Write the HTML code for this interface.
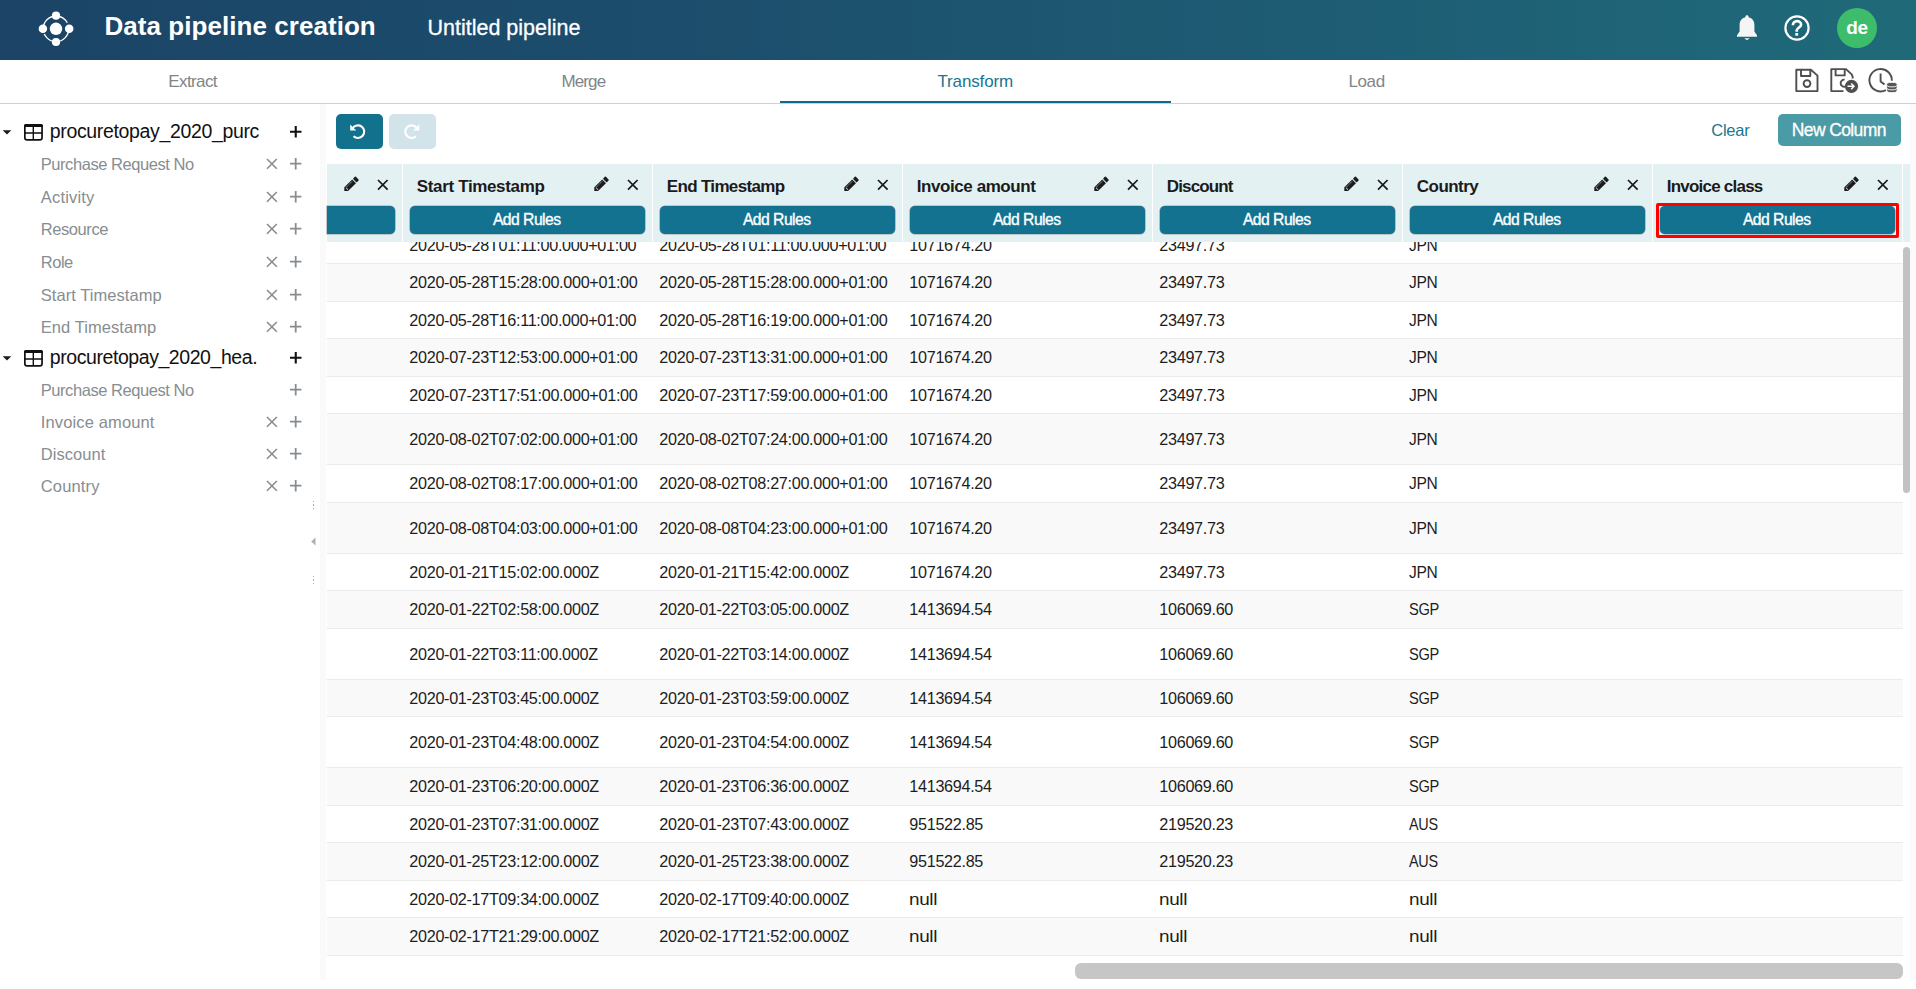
<!DOCTYPE html><html><head><meta charset="utf-8"><style>
*{box-sizing:border-box;margin:0;padding:0}
html,body{width:1916px;height:989px;overflow:hidden;background:#fff}
body{position:relative;font-family:"Liberation Sans",sans-serif}
.t{position:absolute;white-space:pre;line-height:1}
.a{position:absolute}
</style></head><body>
<div class="a" style="left:0;top:0;width:1916px;height:60px;background:linear-gradient(90deg,#1b4466 0%,#1c4d6c 35%,#1e5d74 70%,#1f6a79 100%)"></div>
<svg class="a" style="left:36px;top:9px" width="40" height="40" viewBox="36 9 40 40">
<circle cx="56" cy="28.8" r="12.8" fill="none" stroke="#fff" stroke-width="1.3"/>
<path d="M67.3 22.7A12.8 12.8 0 0 1 68.6 25.6M44.3 34.0A12.8 12.8 0 0 1 43.6 32.3" stroke="#1b4466" stroke-width="2.2" fill="none"/>
<circle cx="56" cy="28.8" r="6.2" fill="#fff"/>
<circle cx="56" cy="15.7" r="4.1" fill="#fff"/>
<circle cx="42.9" cy="28.8" r="4.25" fill="#fff"/>
<circle cx="69.2" cy="28.8" r="4.25" fill="#fff"/>
<circle cx="56" cy="42" r="4.1" fill="#fff"/>
</svg>
<div class="t" style="left:104.50px;top:12.69px;font-size:26px;font-weight:700;color:#fff;letter-spacing:0.05px;">Data pipeline creation</div>
<div class="t" style="left:427.50px;top:17.90px;font-size:21.5px;font-weight:400;color:#fff;letter-spacing:0px;-webkit-text-stroke:0.3px #fff;">Untitled pipeline</div>
<svg class="a" style="left:1734px;top:13.4px" width="26" height="30" viewBox="0 0 26 30">
<path d="M13 2.2c-1 0-1.6.7-1.6 1.5v.6C7.6 5.1 5.6 8.3 5.6 12v6.6L3 22.3v1.4h20v-1.4l-2.6-3.7V12c0-3.7-2-6.9-5.8-7.7v-.6c0-.8-.6-1.5-1.6-1.5z" fill="#f5f5f5"/>
<path d="M10.2 25.2h5.6L13 27.3z" fill="#f5f5f5"/>
</svg>
<svg class="a" style="left:1782px;top:13px" width="30" height="30" viewBox="0 0 30 30">
<circle cx="15" cy="15" r="11.6" fill="none" stroke="#fff" stroke-width="2.2"/>
<path d="M10.9 12.3C10.9 9.7 12.7 8.1 15 8.1C17.3 8.1 19.1 9.6 19.1 11.7C19.1 14.3 15 14.7 14.7 17.4V18.7" fill="none" stroke="#fff" stroke-width="2.6"/>
<rect x="13.3" y="20" width="2.8" height="2.7" fill="#fff"/>
</svg>
<div class="a" style="left:1837px;top:8px;width:40px;height:40px;border-radius:50%;background:#3dbd6c"></div>
<div class="t" style="left:1846.20px;top:18.02px;font-size:19px;font-weight:700;color:#fff;letter-spacing:-0.3px;">de</div>
<div class="a" style="left:0;top:103px;width:1916px;height:1px;background:#cfcfcf"></div>
<div class="a" style="left:780px;top:101px;width:391px;height:2px;background:#0b6b89"></div>
<div class="t" style="left:168.30px;top:72.51px;font-size:17px;font-weight:400;color:#7f8589;letter-spacing:-0.6px;">Extract</div>
<div class="t" style="left:561.50px;top:72.51px;font-size:17px;font-weight:400;color:#7f8589;letter-spacing:-0.9px;">Merge</div>
<div class="t" style="left:937.50px;top:72.51px;font-size:17px;font-weight:400;color:#1a7691;letter-spacing:-0.15px;">Transform</div>
<div class="t" style="left:1348.50px;top:72.51px;font-size:17px;font-weight:400;color:#7f8589;letter-spacing:-0.4px;">Load</div>
<svg class="a" style="left:1790px;top:62px" width="116" height="38" viewBox="1790 62 116 38">
<g fill="none" stroke="#4f4f4f" stroke-width="1.9" stroke-linejoin="round">
<path d="M1796.3 69.8h14.6l6.6 5.8v15.5h-21.2z"/>
<path d="M1801 69.8v6.2h9.3v-6.2"/>
<circle cx="1807" cy="83.6" r="3.4"/>
<path d="M1843.5 91.1h-12.2V69.1h14.7l5.7 5.3 1 2.4v1.6"/>
<path d="M1835.6 69.1v6.3h9.1v-6.3"/>
<path d="M1844.6 79.6a3.6 3.6 0 1 0 .4 7.1"/>
<path d="M1885.9 90.1A11.2 11.2 0 1 1 1891.8 80.8"/>
<path d="M1880.6 73.4v8l3.9 3"/>
</g>
<circle cx="1851.5" cy="86.3" r="6.6" fill="#4f4f4f"/>
<path d="M1847.5 86.3h6.2M1851.2 83.4l2.8 2.9-2.8 2.9" fill="none" stroke="#fff" stroke-width="1.5"/>
<g fill="#575757" stroke="#fff" stroke-width="0.9">
<path d="M1886.6 84.6v6.2a5.3 2.3 0 0 0 10.6 0v-6.2z"/>
<path d="M1886.6 87.6a5.3 2.3 0 0 0 10.6 0" fill="none"/>
<path d="M1886.6 90.4a5.3 2.3 0 0 0 10.6 0" fill="none"/>
<ellipse cx="1891.9" cy="84.6" rx="5.3" ry="2.3"/>
</g>
</svg>
<svg class="a" style="left:2px;top:129.6px" width="10" height="6" viewBox="0 0 10 6"><path d="M0.7 0.2h8.6L5 4.6z" fill="#1a1a1a"/></svg>
<svg class="a" style="left:20px;top:120px" width="26" height="25" viewBox="20 120 26 25"><rect x="24.85" y="124.85" width="17.2" height="15" rx="2.2" fill="none" stroke="#111" stroke-width="1.7"/><rect x="24" y="124" width="18.9" height="3" rx="1.5" fill="#111"/><rect x="24" y="125.5" width="18.9" height="1.5" fill="#111"/><path d="M33.3 126.5v13.5M24.5 133h18" stroke="#111" stroke-width="1.4"/></svg>
<div class="t" style="left:49.80px;top:122.19px;font-size:19.5px;font-weight:400;color:#111;letter-spacing:-0.35px;">procuretopay_2020_purc</div>
<svg class="a" style="left:289.05px;top:125.05px" width="13.5" height="13.5" viewBox="-6.75 -6.75 13.5 13.5"><path d="M-5.75 0H5.75M0 -5.75V5.75" stroke="#111" stroke-width="2.1"/></svg>
<div class="t" style="left:40.80px;top:156.13px;font-size:16.5px;font-weight:400;color:#878d91;letter-spacing:-0.45px;">Purchase Request No</div>
<svg class="a" style="left:266.10px;top:158.20px" width="11.8" height="11.8" viewBox="-5.9 -5.9 11.8 11.8"><path d="M-4.9 -4.9L4.9 4.9M4.9 -4.9L-4.9 4.9" stroke="#878d91" stroke-width="1.6"/></svg>
<svg class="a" style="left:289.10px;top:157.00px" width="13.4" height="13.4" viewBox="-6.7 -6.7 13.4 13.4"><path d="M-5.7 0H5.7M0 -5.7V5.7" stroke="#878d91" stroke-width="1.8"/></svg>
<div class="t" style="left:40.80px;top:188.77px;font-size:16.5px;font-weight:400;color:#878d91;letter-spacing:0.18px;">Activity</div>
<svg class="a" style="left:266.10px;top:190.84px" width="11.8" height="11.8" viewBox="-5.9 -5.9 11.8 11.8"><path d="M-4.9 -4.9L4.9 4.9M4.9 -4.9L-4.9 4.9" stroke="#878d91" stroke-width="1.6"/></svg>
<svg class="a" style="left:289.10px;top:189.64px" width="13.4" height="13.4" viewBox="-6.7 -6.7 13.4 13.4"><path d="M-5.7 0H5.7M0 -5.7V5.7" stroke="#878d91" stroke-width="1.8"/></svg>
<div class="t" style="left:40.80px;top:221.41px;font-size:16.5px;font-weight:400;color:#878d91;letter-spacing:-0.43px;">Resource</div>
<svg class="a" style="left:266.10px;top:223.48px" width="11.8" height="11.8" viewBox="-5.9 -5.9 11.8 11.8"><path d="M-4.9 -4.9L4.9 4.9M4.9 -4.9L-4.9 4.9" stroke="#878d91" stroke-width="1.6"/></svg>
<svg class="a" style="left:289.10px;top:222.28px" width="13.4" height="13.4" viewBox="-6.7 -6.7 13.4 13.4"><path d="M-5.7 0H5.7M0 -5.7V5.7" stroke="#878d91" stroke-width="1.8"/></svg>
<div class="t" style="left:40.80px;top:254.05px;font-size:16.5px;font-weight:400;color:#878d91;letter-spacing:-0.5px;">Role</div>
<svg class="a" style="left:266.10px;top:256.12px" width="11.8" height="11.8" viewBox="-5.9 -5.9 11.8 11.8"><path d="M-4.9 -4.9L4.9 4.9M4.9 -4.9L-4.9 4.9" stroke="#878d91" stroke-width="1.6"/></svg>
<svg class="a" style="left:289.10px;top:254.92px" width="13.4" height="13.4" viewBox="-6.7 -6.7 13.4 13.4"><path d="M-5.7 0H5.7M0 -5.7V5.7" stroke="#878d91" stroke-width="1.8"/></svg>
<div class="t" style="left:40.80px;top:286.69px;font-size:16.5px;font-weight:400;color:#878d91;letter-spacing:0.05px;">Start Timestamp</div>
<svg class="a" style="left:266.10px;top:288.76px" width="11.8" height="11.8" viewBox="-5.9 -5.9 11.8 11.8"><path d="M-4.9 -4.9L4.9 4.9M4.9 -4.9L-4.9 4.9" stroke="#878d91" stroke-width="1.6"/></svg>
<svg class="a" style="left:289.10px;top:287.56px" width="13.4" height="13.4" viewBox="-6.7 -6.7 13.4 13.4"><path d="M-5.7 0H5.7M0 -5.7V5.7" stroke="#878d91" stroke-width="1.8"/></svg>
<div class="t" style="left:40.80px;top:319.33px;font-size:16.5px;font-weight:400;color:#878d91;letter-spacing:0.07px;">End Timestamp</div>
<svg class="a" style="left:266.10px;top:321.40px" width="11.8" height="11.8" viewBox="-5.9 -5.9 11.8 11.8"><path d="M-4.9 -4.9L4.9 4.9M4.9 -4.9L-4.9 4.9" stroke="#878d91" stroke-width="1.6"/></svg>
<svg class="a" style="left:289.10px;top:320.20px" width="13.4" height="13.4" viewBox="-6.7 -6.7 13.4 13.4"><path d="M-5.7 0H5.7M0 -5.7V5.7" stroke="#878d91" stroke-width="1.8"/></svg>
<svg class="a" style="left:2px;top:355.7px" width="10" height="6" viewBox="0 0 10 6"><path d="M0.7 0.2h8.6L5 4.6z" fill="#1a1a1a"/></svg>
<svg class="a" style="left:20px;top:346.1px" width="26" height="25" viewBox="20 120 26 25"><rect x="24.85" y="124.85" width="17.2" height="15" rx="2.2" fill="none" stroke="#111" stroke-width="1.7"/><rect x="24" y="124" width="18.9" height="3" rx="1.5" fill="#111"/><rect x="24" y="125.5" width="18.9" height="1.5" fill="#111"/><path d="M33.3 126.5v13.5M24.5 133h18" stroke="#111" stroke-width="1.4"/></svg>
<div class="t" style="left:49.80px;top:347.59px;font-size:19.5px;font-weight:400;color:#111;letter-spacing:-0.43px;">procuretopay_2020_hea.</div>
<svg class="a" style="left:289.05px;top:351.15px" width="13.5" height="13.5" viewBox="-6.75 -6.75 13.5 13.5"><path d="M-5.75 0H5.75M0 -5.75V5.75" stroke="#111" stroke-width="2.1"/></svg>
<div class="t" style="left:40.80px;top:381.83px;font-size:16.5px;font-weight:400;color:#878d91;letter-spacing:-0.45px;">Purchase Request No</div>
<svg class="a" style="left:289.10px;top:382.70px" width="13.4" height="13.4" viewBox="-6.7 -6.7 13.4 13.4"><path d="M-5.7 0H5.7M0 -5.7V5.7" stroke="#878d91" stroke-width="1.8"/></svg>
<div class="t" style="left:40.80px;top:413.90px;font-size:16.5px;font-weight:400;color:#878d91;letter-spacing:0.13px;">Invoice amount</div>
<svg class="a" style="left:266.10px;top:415.97px" width="11.8" height="11.8" viewBox="-5.9 -5.9 11.8 11.8"><path d="M-4.9 -4.9L4.9 4.9M4.9 -4.9L-4.9 4.9" stroke="#878d91" stroke-width="1.6"/></svg>
<svg class="a" style="left:289.10px;top:414.77px" width="13.4" height="13.4" viewBox="-6.7 -6.7 13.4 13.4"><path d="M-5.7 0H5.7M0 -5.7V5.7" stroke="#878d91" stroke-width="1.8"/></svg>
<div class="t" style="left:40.80px;top:445.97px;font-size:16.5px;font-weight:400;color:#878d91;letter-spacing:0.04px;">Discount</div>
<svg class="a" style="left:266.10px;top:448.04px" width="11.8" height="11.8" viewBox="-5.9 -5.9 11.8 11.8"><path d="M-4.9 -4.9L4.9 4.9M4.9 -4.9L-4.9 4.9" stroke="#878d91" stroke-width="1.6"/></svg>
<svg class="a" style="left:289.10px;top:446.84px" width="13.4" height="13.4" viewBox="-6.7 -6.7 13.4 13.4"><path d="M-5.7 0H5.7M0 -5.7V5.7" stroke="#878d91" stroke-width="1.8"/></svg>
<div class="t" style="left:40.80px;top:478.04px;font-size:16.5px;font-weight:400;color:#878d91;letter-spacing:0.15px;">Country</div>
<svg class="a" style="left:266.10px;top:480.11px" width="11.8" height="11.8" viewBox="-5.9 -5.9 11.8 11.8"><path d="M-4.9 -4.9L4.9 4.9M4.9 -4.9L-4.9 4.9" stroke="#878d91" stroke-width="1.6"/></svg>
<svg class="a" style="left:289.10px;top:478.91px" width="13.4" height="13.4" viewBox="-6.7 -6.7 13.4 13.4"><path d="M-5.7 0H5.7M0 -5.7V5.7" stroke="#878d91" stroke-width="1.8"/></svg>
<div class="a" style="left:320px;top:104px;width:6px;height:876px;background:#fafafa"></div>
<div class="a" style="left:312.5px;top:501.0px;width:1.2px;height:1.2px;background:#a8a8a8"></div>
<div class="a" style="left:312.5px;top:504.4px;width:1.2px;height:1.2px;background:#a8a8a8"></div>
<div class="a" style="left:312.5px;top:507.8px;width:1.2px;height:1.2px;background:#a8a8a8"></div>
<div class="a" style="left:312.5px;top:576.0px;width:1.2px;height:1.2px;background:#a8a8a8"></div>
<div class="a" style="left:312.5px;top:579.4px;width:1.2px;height:1.2px;background:#a8a8a8"></div>
<div class="a" style="left:312.5px;top:582.8px;width:1.2px;height:1.2px;background:#a8a8a8"></div>
<svg class="a" style="left:310px;top:537px" width="7" height="9" viewBox="0 0 7 9"><path d="M5.5 0.6v7.8L1.2 4.5z" fill="#b0b0b0"/></svg>
<div class="a" style="left:336px;top:114px;width:47px;height:35px;border-radius:5px;background:#12718d"></div>
<div class="a" style="left:389px;top:114px;width:47px;height:35px;border-radius:5px;background:#d2e3e9"></div>
<svg class="a" style="left:346px;top:120px" width="26" height="24" viewBox="346 120 26 24">
<path d="M352.6 128.3a6.3 6.3 0 1 1 .9 7.9" fill="none" stroke="#fff" stroke-width="2.1"/>
<path d="M350.2 124.6v6h6z" fill="#fff"/>
</svg>
<svg class="a" style="left:397px;top:120px" width="26" height="24" viewBox="399 120 26 24">
<path d="M418.9 128.3a6.3 6.3 0 1 0 -.9 7.9" fill="none" stroke="#fff" stroke-width="2.1"/>
<path d="M421.3 124.6v6h-6z" fill="#fff"/>
</svg>
<div class="t" style="left:1711.20px;top:121.93px;font-size:16.5px;font-weight:400;color:#177892;letter-spacing:-0.2px;">Clear</div>
<div class="a" style="left:1778px;top:114px;width:123px;height:32px;border-radius:5px;background:#4b9ba6"></div>
<div class="t" style="left:1791.80px;top:122.49px;font-size:17.5px;font-weight:400;color:#fff;letter-spacing:-0.62px;-webkit-text-stroke:0.3px #fff;">New Column</div>
<div class="a" style="left:327px;top:164px;width:1583px;height:78px;background:#e4f1f3"></div>
<svg class="a" style="left:344px;top:176px" width="18" height="18" viewBox="344 176 18 18"><g transform="translate(344.3,191.1) rotate(-45)"><path d="M0 0L2.65 -2.65H13.85V2.65H2.65Z" fill="#1c1c1c"/><rect x="14.75" y="-2.65" width="3.55" height="5.3" rx="0.8" fill="#1c1c1c"/><path d="M3.6 -1.4V1.8" stroke="#e4f1f3" stroke-width="0.9"/><path d="M4.8 -1.35H12.6" stroke="#e4f1f3" stroke-width="0.7" stroke-dasharray="1.1 0.7"/></g></svg>
<svg class="a" style="left:377.10px;top:179.40px" width="11.6" height="11.6" viewBox="-5.8 -5.8 11.6 11.6"><path d="M-4.8 -4.8L4.8 4.8M4.8 -4.8L-4.8 4.8" stroke="#1a1a1a" stroke-width="1.75"/></svg>
<div class="a" style="left:327px;top:205.6px;width:68.0px;height:28.9px;border-radius:0 5px 5px 0;background:#127290;box-shadow:0 0 0 0.6px rgba(80,90,95,.55)"></div>
<div class="a" style="left:402px;top:164px;width:1px;height:78px;background:#fff"></div>
<svg class="a" style="left:594px;top:176px" width="18" height="18" viewBox="594 176 18 18"><g transform="translate(594.3,191.1) rotate(-45)"><path d="M0 0L2.65 -2.65H13.85V2.65H2.65Z" fill="#1c1c1c"/><rect x="14.75" y="-2.65" width="3.55" height="5.3" rx="0.8" fill="#1c1c1c"/><path d="M3.6 -1.4V1.8" stroke="#e4f1f3" stroke-width="0.9"/><path d="M4.8 -1.35H12.6" stroke="#e4f1f3" stroke-width="0.7" stroke-dasharray="1.1 0.7"/></g></svg>
<svg class="a" style="left:627.10px;top:179.40px" width="11.6" height="11.6" viewBox="-5.8 -5.8 11.6 11.6"><path d="M-4.8 -4.8L4.8 4.8M4.8 -4.8L-4.8 4.8" stroke="#1a1a1a" stroke-width="1.75"/></svg>
<div class="a" style="left:409.5px;top:205.6px;width:235.5px;height:28.9px;border-radius:5px;background:#127290;box-shadow:0 0 0 0.6px rgba(80,90,95,.55)"></div>
<div class="t" style="left:416.80px;top:177.71px;font-size:17px;font-weight:700;color:#1b1b1b;letter-spacing:-0.35px;">Start Timestamp</div>
<div class="t" style="left:492.90px;top:211.81px;font-size:15.7px;font-weight:400;color:#fff;letter-spacing:-0.52px;-webkit-text-stroke:0.35px #fff;">Add Rules</div>
<div class="a" style="left:652px;top:164px;width:1px;height:78px;background:#fff"></div>
<svg class="a" style="left:844px;top:176px" width="18" height="18" viewBox="844 176 18 18"><g transform="translate(844.3,191.1) rotate(-45)"><path d="M0 0L2.65 -2.65H13.85V2.65H2.65Z" fill="#1c1c1c"/><rect x="14.75" y="-2.65" width="3.55" height="5.3" rx="0.8" fill="#1c1c1c"/><path d="M3.6 -1.4V1.8" stroke="#e4f1f3" stroke-width="0.9"/><path d="M4.8 -1.35H12.6" stroke="#e4f1f3" stroke-width="0.7" stroke-dasharray="1.1 0.7"/></g></svg>
<svg class="a" style="left:877.10px;top:179.40px" width="11.6" height="11.6" viewBox="-5.8 -5.8 11.6 11.6"><path d="M-4.8 -4.8L4.8 4.8M4.8 -4.8L-4.8 4.8" stroke="#1a1a1a" stroke-width="1.75"/></svg>
<div class="a" style="left:659.5px;top:205.6px;width:235.5px;height:28.9px;border-radius:5px;background:#127290;box-shadow:0 0 0 0.6px rgba(80,90,95,.55)"></div>
<div class="t" style="left:666.80px;top:177.71px;font-size:17px;font-weight:700;color:#1b1b1b;letter-spacing:-0.67px;">End Timestamp</div>
<div class="t" style="left:742.90px;top:211.81px;font-size:15.7px;font-weight:400;color:#fff;letter-spacing:-0.52px;-webkit-text-stroke:0.35px #fff;">Add Rules</div>
<div class="a" style="left:902px;top:164px;width:1px;height:78px;background:#fff"></div>
<svg class="a" style="left:1094px;top:176px" width="18" height="18" viewBox="1094 176 18 18"><g transform="translate(1094.3,191.1) rotate(-45)"><path d="M0 0L2.65 -2.65H13.85V2.65H2.65Z" fill="#1c1c1c"/><rect x="14.75" y="-2.65" width="3.55" height="5.3" rx="0.8" fill="#1c1c1c"/><path d="M3.6 -1.4V1.8" stroke="#e4f1f3" stroke-width="0.9"/><path d="M4.8 -1.35H12.6" stroke="#e4f1f3" stroke-width="0.7" stroke-dasharray="1.1 0.7"/></g></svg>
<svg class="a" style="left:1127.10px;top:179.40px" width="11.6" height="11.6" viewBox="-5.8 -5.8 11.6 11.6"><path d="M-4.8 -4.8L4.8 4.8M4.8 -4.8L-4.8 4.8" stroke="#1a1a1a" stroke-width="1.75"/></svg>
<div class="a" style="left:909.5px;top:205.6px;width:235.5px;height:28.9px;border-radius:5px;background:#127290;box-shadow:0 0 0 0.6px rgba(80,90,95,.55)"></div>
<div class="t" style="left:916.80px;top:177.71px;font-size:17px;font-weight:700;color:#1b1b1b;letter-spacing:-0.43px;">Invoice amount</div>
<div class="t" style="left:992.90px;top:211.81px;font-size:15.7px;font-weight:400;color:#fff;letter-spacing:-0.52px;-webkit-text-stroke:0.35px #fff;">Add Rules</div>
<div class="a" style="left:1152px;top:164px;width:1px;height:78px;background:#fff"></div>
<svg class="a" style="left:1344px;top:176px" width="18" height="18" viewBox="1344 176 18 18"><g transform="translate(1344.3,191.1) rotate(-45)"><path d="M0 0L2.65 -2.65H13.85V2.65H2.65Z" fill="#1c1c1c"/><rect x="14.75" y="-2.65" width="3.55" height="5.3" rx="0.8" fill="#1c1c1c"/><path d="M3.6 -1.4V1.8" stroke="#e4f1f3" stroke-width="0.9"/><path d="M4.8 -1.35H12.6" stroke="#e4f1f3" stroke-width="0.7" stroke-dasharray="1.1 0.7"/></g></svg>
<svg class="a" style="left:1377.10px;top:179.40px" width="11.6" height="11.6" viewBox="-5.8 -5.8 11.6 11.6"><path d="M-4.8 -4.8L4.8 4.8M4.8 -4.8L-4.8 4.8" stroke="#1a1a1a" stroke-width="1.75"/></svg>
<div class="a" style="left:1159.5px;top:205.6px;width:235.5px;height:28.9px;border-radius:5px;background:#127290;box-shadow:0 0 0 0.6px rgba(80,90,95,.55)"></div>
<div class="t" style="left:1166.80px;top:177.71px;font-size:17px;font-weight:700;color:#1b1b1b;letter-spacing:-0.86px;">Discount</div>
<div class="t" style="left:1242.90px;top:211.81px;font-size:15.7px;font-weight:400;color:#fff;letter-spacing:-0.52px;-webkit-text-stroke:0.35px #fff;">Add Rules</div>
<div class="a" style="left:1402px;top:164px;width:1px;height:78px;background:#fff"></div>
<svg class="a" style="left:1594px;top:176px" width="18" height="18" viewBox="1594 176 18 18"><g transform="translate(1594.3,191.1) rotate(-45)"><path d="M0 0L2.65 -2.65H13.85V2.65H2.65Z" fill="#1c1c1c"/><rect x="14.75" y="-2.65" width="3.55" height="5.3" rx="0.8" fill="#1c1c1c"/><path d="M3.6 -1.4V1.8" stroke="#e4f1f3" stroke-width="0.9"/><path d="M4.8 -1.35H12.6" stroke="#e4f1f3" stroke-width="0.7" stroke-dasharray="1.1 0.7"/></g></svg>
<svg class="a" style="left:1627.10px;top:179.40px" width="11.6" height="11.6" viewBox="-5.8 -5.8 11.6 11.6"><path d="M-4.8 -4.8L4.8 4.8M4.8 -4.8L-4.8 4.8" stroke="#1a1a1a" stroke-width="1.75"/></svg>
<div class="a" style="left:1409.5px;top:205.6px;width:235.5px;height:28.9px;border-radius:5px;background:#127290;box-shadow:0 0 0 0.6px rgba(80,90,95,.55)"></div>
<div class="t" style="left:1416.80px;top:177.71px;font-size:17px;font-weight:700;color:#1b1b1b;letter-spacing:-0.53px;">Country</div>
<div class="t" style="left:1492.90px;top:211.81px;font-size:15.7px;font-weight:400;color:#fff;letter-spacing:-0.52px;-webkit-text-stroke:0.35px #fff;">Add Rules</div>
<div class="a" style="left:1652px;top:164px;width:1px;height:78px;background:#fff"></div>
<svg class="a" style="left:1844px;top:176px" width="18" height="18" viewBox="1844 176 18 18"><g transform="translate(1844.3,191.1) rotate(-45)"><path d="M0 0L2.65 -2.65H13.85V2.65H2.65Z" fill="#1c1c1c"/><rect x="14.75" y="-2.65" width="3.55" height="5.3" rx="0.8" fill="#1c1c1c"/><path d="M3.6 -1.4V1.8" stroke="#e4f1f3" stroke-width="0.9"/><path d="M4.8 -1.35H12.6" stroke="#e4f1f3" stroke-width="0.7" stroke-dasharray="1.1 0.7"/></g></svg>
<svg class="a" style="left:1877.10px;top:179.40px" width="11.6" height="11.6" viewBox="-5.8 -5.8 11.6 11.6"><path d="M-4.8 -4.8L4.8 4.8M4.8 -4.8L-4.8 4.8" stroke="#1a1a1a" stroke-width="1.75"/></svg>
<div class="a" style="left:1659.5px;top:205.6px;width:235.5px;height:28.9px;border-radius:5px;background:#127290;box-shadow:0 0 0 0.6px rgba(80,90,95,.55)"></div>
<div class="t" style="left:1666.80px;top:177.71px;font-size:17px;font-weight:700;color:#1b1b1b;letter-spacing:-0.78px;">Invoice class</div>
<div class="t" style="left:1742.90px;top:211.81px;font-size:15.7px;font-weight:400;color:#fff;letter-spacing:-0.52px;-webkit-text-stroke:0.35px #fff;">Add Rules</div>
<div class="a" style="left:1902px;top:164px;width:1px;height:78px;background:#fff"></div>
<div class="a" style="left:1655.9px;top:203.1px;width:243.1px;height:34.5px;border:3px solid #f00;border-radius:2px"></div>
<div class="a" style="left:0;top:242px;width:1916px;height:747px;overflow:hidden">
<div class="a" style="left:0;top:-242px;width:1916px;height:989px">
<div class="a" style="left:327px;top:227px;width:1576px;height:36px;background:#fff"></div>
<div class="a" style="left:327px;top:263px;width:1576px;height:1px;background:#ebebeb"></div>
<div class="t" style="left:409.30px;top:236.79px;font-size:16.2px;font-weight:400;color:#1d1d1d;letter-spacing:-0.31px;">2020-05-28T01:11:00.000+01:00</div>
<div class="t" style="left:659.30px;top:236.79px;font-size:16.2px;font-weight:400;color:#1d1d1d;letter-spacing:-0.31px;">2020-05-28T01:11:00.000+01:00</div>
<div class="t" style="left:909.30px;top:236.79px;font-size:16.2px;font-weight:400;color:#1d1d1d;letter-spacing:-0.31px;">1071674.20</div>
<div class="t" style="left:1159.30px;top:236.79px;font-size:16.2px;font-weight:400;color:#1d1d1d;letter-spacing:-0.31px;">23497.73</div>
<div class="t" style="left:1409.30px;top:236.79px;font-size:16.2px;font-weight:400;color:#1d1d1d;letter-spacing:-0.31px;transform:scaleX(0.962);transform-origin:0 0;">JPN</div>
<div class="a" style="left:327px;top:264px;width:1576px;height:37px;background:#f9f9f9"></div>
<div class="a" style="left:327px;top:301px;width:1576px;height:1px;background:#ebebeb"></div>
<div class="t" style="left:409.30px;top:274.29px;font-size:16.2px;font-weight:400;color:#1d1d1d;letter-spacing:-0.31px;">2020-05-28T15:28:00.000+01:00</div>
<div class="t" style="left:659.30px;top:274.29px;font-size:16.2px;font-weight:400;color:#1d1d1d;letter-spacing:-0.31px;">2020-05-28T15:28:00.000+01:00</div>
<div class="t" style="left:909.30px;top:274.29px;font-size:16.2px;font-weight:400;color:#1d1d1d;letter-spacing:-0.31px;">1071674.20</div>
<div class="t" style="left:1159.30px;top:274.29px;font-size:16.2px;font-weight:400;color:#1d1d1d;letter-spacing:-0.31px;">23497.73</div>
<div class="t" style="left:1409.30px;top:274.29px;font-size:16.2px;font-weight:400;color:#1d1d1d;letter-spacing:-0.31px;transform:scaleX(0.962);transform-origin:0 0;">JPN</div>
<div class="a" style="left:327px;top:302px;width:1576px;height:36px;background:#fff"></div>
<div class="a" style="left:327px;top:338px;width:1576px;height:1px;background:#ebebeb"></div>
<div class="t" style="left:409.30px;top:311.79px;font-size:16.2px;font-weight:400;color:#1d1d1d;letter-spacing:-0.31px;">2020-05-28T16:11:00.000+01:00</div>
<div class="t" style="left:659.30px;top:311.79px;font-size:16.2px;font-weight:400;color:#1d1d1d;letter-spacing:-0.31px;">2020-05-28T16:19:00.000+01:00</div>
<div class="t" style="left:909.30px;top:311.79px;font-size:16.2px;font-weight:400;color:#1d1d1d;letter-spacing:-0.31px;">1071674.20</div>
<div class="t" style="left:1159.30px;top:311.79px;font-size:16.2px;font-weight:400;color:#1d1d1d;letter-spacing:-0.31px;">23497.73</div>
<div class="t" style="left:1409.30px;top:311.79px;font-size:16.2px;font-weight:400;color:#1d1d1d;letter-spacing:-0.31px;transform:scaleX(0.962);transform-origin:0 0;">JPN</div>
<div class="a" style="left:327px;top:339px;width:1576px;height:37px;background:#f9f9f9"></div>
<div class="a" style="left:327px;top:376px;width:1576px;height:1px;background:#ebebeb"></div>
<div class="t" style="left:409.30px;top:349.29px;font-size:16.2px;font-weight:400;color:#1d1d1d;letter-spacing:-0.31px;">2020-07-23T12:53:00.000+01:00</div>
<div class="t" style="left:659.30px;top:349.29px;font-size:16.2px;font-weight:400;color:#1d1d1d;letter-spacing:-0.31px;">2020-07-23T13:31:00.000+01:00</div>
<div class="t" style="left:909.30px;top:349.29px;font-size:16.2px;font-weight:400;color:#1d1d1d;letter-spacing:-0.31px;">1071674.20</div>
<div class="t" style="left:1159.30px;top:349.29px;font-size:16.2px;font-weight:400;color:#1d1d1d;letter-spacing:-0.31px;">23497.73</div>
<div class="t" style="left:1409.30px;top:349.29px;font-size:16.2px;font-weight:400;color:#1d1d1d;letter-spacing:-0.31px;transform:scaleX(0.962);transform-origin:0 0;">JPN</div>
<div class="a" style="left:327px;top:377px;width:1576px;height:36px;background:#fff"></div>
<div class="a" style="left:327px;top:413px;width:1576px;height:1px;background:#ebebeb"></div>
<div class="t" style="left:409.30px;top:386.79px;font-size:16.2px;font-weight:400;color:#1d1d1d;letter-spacing:-0.31px;">2020-07-23T17:51:00.000+01:00</div>
<div class="t" style="left:659.30px;top:386.79px;font-size:16.2px;font-weight:400;color:#1d1d1d;letter-spacing:-0.31px;">2020-07-23T17:59:00.000+01:00</div>
<div class="t" style="left:909.30px;top:386.79px;font-size:16.2px;font-weight:400;color:#1d1d1d;letter-spacing:-0.31px;">1071674.20</div>
<div class="t" style="left:1159.30px;top:386.79px;font-size:16.2px;font-weight:400;color:#1d1d1d;letter-spacing:-0.31px;">23497.73</div>
<div class="t" style="left:1409.30px;top:386.79px;font-size:16.2px;font-weight:400;color:#1d1d1d;letter-spacing:-0.31px;transform:scaleX(0.962);transform-origin:0 0;">JPN</div>
<div class="a" style="left:327px;top:414px;width:1576px;height:50px;background:#f9f9f9"></div>
<div class="a" style="left:327px;top:464px;width:1576px;height:1px;background:#ebebeb"></div>
<div class="t" style="left:409.30px;top:430.79px;font-size:16.2px;font-weight:400;color:#1d1d1d;letter-spacing:-0.31px;">2020-08-02T07:02:00.000+01:00</div>
<div class="t" style="left:659.30px;top:430.79px;font-size:16.2px;font-weight:400;color:#1d1d1d;letter-spacing:-0.31px;">2020-08-02T07:24:00.000+01:00</div>
<div class="t" style="left:909.30px;top:430.79px;font-size:16.2px;font-weight:400;color:#1d1d1d;letter-spacing:-0.31px;">1071674.20</div>
<div class="t" style="left:1159.30px;top:430.79px;font-size:16.2px;font-weight:400;color:#1d1d1d;letter-spacing:-0.31px;">23497.73</div>
<div class="t" style="left:1409.30px;top:430.79px;font-size:16.2px;font-weight:400;color:#1d1d1d;letter-spacing:-0.31px;transform:scaleX(0.962);transform-origin:0 0;">JPN</div>
<div class="a" style="left:327px;top:465px;width:1576px;height:37px;background:#fff"></div>
<div class="a" style="left:327px;top:502px;width:1576px;height:1px;background:#ebebeb"></div>
<div class="t" style="left:409.30px;top:475.29px;font-size:16.2px;font-weight:400;color:#1d1d1d;letter-spacing:-0.31px;">2020-08-02T08:17:00.000+01:00</div>
<div class="t" style="left:659.30px;top:475.29px;font-size:16.2px;font-weight:400;color:#1d1d1d;letter-spacing:-0.31px;">2020-08-02T08:27:00.000+01:00</div>
<div class="t" style="left:909.30px;top:475.29px;font-size:16.2px;font-weight:400;color:#1d1d1d;letter-spacing:-0.31px;">1071674.20</div>
<div class="t" style="left:1159.30px;top:475.29px;font-size:16.2px;font-weight:400;color:#1d1d1d;letter-spacing:-0.31px;">23497.73</div>
<div class="t" style="left:1409.30px;top:475.29px;font-size:16.2px;font-weight:400;color:#1d1d1d;letter-spacing:-0.31px;transform:scaleX(0.962);transform-origin:0 0;">JPN</div>
<div class="a" style="left:327px;top:503px;width:1576px;height:50px;background:#f9f9f9"></div>
<div class="a" style="left:327px;top:553px;width:1576px;height:1px;background:#ebebeb"></div>
<div class="t" style="left:409.30px;top:519.79px;font-size:16.2px;font-weight:400;color:#1d1d1d;letter-spacing:-0.31px;">2020-08-08T04:03:00.000+01:00</div>
<div class="t" style="left:659.30px;top:519.79px;font-size:16.2px;font-weight:400;color:#1d1d1d;letter-spacing:-0.31px;">2020-08-08T04:23:00.000+01:00</div>
<div class="t" style="left:909.30px;top:519.79px;font-size:16.2px;font-weight:400;color:#1d1d1d;letter-spacing:-0.31px;">1071674.20</div>
<div class="t" style="left:1159.30px;top:519.79px;font-size:16.2px;font-weight:400;color:#1d1d1d;letter-spacing:-0.31px;">23497.73</div>
<div class="t" style="left:1409.30px;top:519.79px;font-size:16.2px;font-weight:400;color:#1d1d1d;letter-spacing:-0.31px;transform:scaleX(0.962);transform-origin:0 0;">JPN</div>
<div class="a" style="left:327px;top:554px;width:1576px;height:36px;background:#fff"></div>
<div class="a" style="left:327px;top:590px;width:1576px;height:1px;background:#ebebeb"></div>
<div class="t" style="left:409.30px;top:563.79px;font-size:16.2px;font-weight:400;color:#1d1d1d;letter-spacing:-0.31px;">2020-01-21T15:02:00.000Z</div>
<div class="t" style="left:659.30px;top:563.79px;font-size:16.2px;font-weight:400;color:#1d1d1d;letter-spacing:-0.31px;">2020-01-21T15:42:00.000Z</div>
<div class="t" style="left:909.30px;top:563.79px;font-size:16.2px;font-weight:400;color:#1d1d1d;letter-spacing:-0.31px;">1071674.20</div>
<div class="t" style="left:1159.30px;top:563.79px;font-size:16.2px;font-weight:400;color:#1d1d1d;letter-spacing:-0.31px;">23497.73</div>
<div class="t" style="left:1409.30px;top:563.79px;font-size:16.2px;font-weight:400;color:#1d1d1d;letter-spacing:-0.31px;transform:scaleX(0.962);transform-origin:0 0;">JPN</div>
<div class="a" style="left:327px;top:591px;width:1576px;height:37px;background:#f9f9f9"></div>
<div class="a" style="left:327px;top:628px;width:1576px;height:1px;background:#ebebeb"></div>
<div class="t" style="left:409.30px;top:601.29px;font-size:16.2px;font-weight:400;color:#1d1d1d;letter-spacing:-0.31px;">2020-01-22T02:58:00.000Z</div>
<div class="t" style="left:659.30px;top:601.29px;font-size:16.2px;font-weight:400;color:#1d1d1d;letter-spacing:-0.31px;">2020-01-22T03:05:00.000Z</div>
<div class="t" style="left:909.30px;top:601.29px;font-size:16.2px;font-weight:400;color:#1d1d1d;letter-spacing:-0.31px;">1413694.54</div>
<div class="t" style="left:1159.30px;top:601.29px;font-size:16.2px;font-weight:400;color:#1d1d1d;letter-spacing:-0.31px;">106069.60</div>
<div class="t" style="left:1409.30px;top:601.29px;font-size:16.2px;font-weight:400;color:#1d1d1d;letter-spacing:-0.31px;transform:scaleX(0.903);transform-origin:0 0;">SGP</div>
<div class="a" style="left:327px;top:629px;width:1576px;height:50px;background:#fff"></div>
<div class="a" style="left:327px;top:679px;width:1576px;height:1px;background:#ebebeb"></div>
<div class="t" style="left:409.30px;top:645.79px;font-size:16.2px;font-weight:400;color:#1d1d1d;letter-spacing:-0.31px;">2020-01-22T03:11:00.000Z</div>
<div class="t" style="left:659.30px;top:645.79px;font-size:16.2px;font-weight:400;color:#1d1d1d;letter-spacing:-0.31px;">2020-01-22T03:14:00.000Z</div>
<div class="t" style="left:909.30px;top:645.79px;font-size:16.2px;font-weight:400;color:#1d1d1d;letter-spacing:-0.31px;">1413694.54</div>
<div class="t" style="left:1159.30px;top:645.79px;font-size:16.2px;font-weight:400;color:#1d1d1d;letter-spacing:-0.31px;">106069.60</div>
<div class="t" style="left:1409.30px;top:645.79px;font-size:16.2px;font-weight:400;color:#1d1d1d;letter-spacing:-0.31px;transform:scaleX(0.903);transform-origin:0 0;">SGP</div>
<div class="a" style="left:327px;top:680px;width:1576px;height:36px;background:#f9f9f9"></div>
<div class="a" style="left:327px;top:716px;width:1576px;height:1px;background:#ebebeb"></div>
<div class="t" style="left:409.30px;top:689.79px;font-size:16.2px;font-weight:400;color:#1d1d1d;letter-spacing:-0.31px;">2020-01-23T03:45:00.000Z</div>
<div class="t" style="left:659.30px;top:689.79px;font-size:16.2px;font-weight:400;color:#1d1d1d;letter-spacing:-0.31px;">2020-01-23T03:59:00.000Z</div>
<div class="t" style="left:909.30px;top:689.79px;font-size:16.2px;font-weight:400;color:#1d1d1d;letter-spacing:-0.31px;">1413694.54</div>
<div class="t" style="left:1159.30px;top:689.79px;font-size:16.2px;font-weight:400;color:#1d1d1d;letter-spacing:-0.31px;">106069.60</div>
<div class="t" style="left:1409.30px;top:689.79px;font-size:16.2px;font-weight:400;color:#1d1d1d;letter-spacing:-0.31px;transform:scaleX(0.903);transform-origin:0 0;">SGP</div>
<div class="a" style="left:327px;top:717px;width:1576px;height:50px;background:#fff"></div>
<div class="a" style="left:327px;top:767px;width:1576px;height:1px;background:#ebebeb"></div>
<div class="t" style="left:409.30px;top:733.79px;font-size:16.2px;font-weight:400;color:#1d1d1d;letter-spacing:-0.31px;">2020-01-23T04:48:00.000Z</div>
<div class="t" style="left:659.30px;top:733.79px;font-size:16.2px;font-weight:400;color:#1d1d1d;letter-spacing:-0.31px;">2020-01-23T04:54:00.000Z</div>
<div class="t" style="left:909.30px;top:733.79px;font-size:16.2px;font-weight:400;color:#1d1d1d;letter-spacing:-0.31px;">1413694.54</div>
<div class="t" style="left:1159.30px;top:733.79px;font-size:16.2px;font-weight:400;color:#1d1d1d;letter-spacing:-0.31px;">106069.60</div>
<div class="t" style="left:1409.30px;top:733.79px;font-size:16.2px;font-weight:400;color:#1d1d1d;letter-spacing:-0.31px;transform:scaleX(0.903);transform-origin:0 0;">SGP</div>
<div class="a" style="left:327px;top:768px;width:1576px;height:37px;background:#f9f9f9"></div>
<div class="a" style="left:327px;top:805px;width:1576px;height:1px;background:#ebebeb"></div>
<div class="t" style="left:409.30px;top:778.29px;font-size:16.2px;font-weight:400;color:#1d1d1d;letter-spacing:-0.31px;">2020-01-23T06:20:00.000Z</div>
<div class="t" style="left:659.30px;top:778.29px;font-size:16.2px;font-weight:400;color:#1d1d1d;letter-spacing:-0.31px;">2020-01-23T06:36:00.000Z</div>
<div class="t" style="left:909.30px;top:778.29px;font-size:16.2px;font-weight:400;color:#1d1d1d;letter-spacing:-0.31px;">1413694.54</div>
<div class="t" style="left:1159.30px;top:778.29px;font-size:16.2px;font-weight:400;color:#1d1d1d;letter-spacing:-0.31px;">106069.60</div>
<div class="t" style="left:1409.30px;top:778.29px;font-size:16.2px;font-weight:400;color:#1d1d1d;letter-spacing:-0.31px;transform:scaleX(0.903);transform-origin:0 0;">SGP</div>
<div class="a" style="left:327px;top:806px;width:1576px;height:36px;background:#fff"></div>
<div class="a" style="left:327px;top:842px;width:1576px;height:1px;background:#ebebeb"></div>
<div class="t" style="left:409.30px;top:815.79px;font-size:16.2px;font-weight:400;color:#1d1d1d;letter-spacing:-0.31px;">2020-01-23T07:31:00.000Z</div>
<div class="t" style="left:659.30px;top:815.79px;font-size:16.2px;font-weight:400;color:#1d1d1d;letter-spacing:-0.31px;">2020-01-23T07:43:00.000Z</div>
<div class="t" style="left:909.30px;top:815.79px;font-size:16.2px;font-weight:400;color:#1d1d1d;letter-spacing:-0.31px;">951522.85</div>
<div class="t" style="left:1159.30px;top:815.79px;font-size:16.2px;font-weight:400;color:#1d1d1d;letter-spacing:-0.31px;">219520.23</div>
<div class="t" style="left:1409.30px;top:815.79px;font-size:16.2px;font-weight:400;color:#1d1d1d;letter-spacing:-0.31px;transform:scaleX(0.89);transform-origin:0 0;">AUS</div>
<div class="a" style="left:327px;top:843px;width:1576px;height:37px;background:#f9f9f9"></div>
<div class="a" style="left:327px;top:880px;width:1576px;height:1px;background:#ebebeb"></div>
<div class="t" style="left:409.30px;top:853.29px;font-size:16.2px;font-weight:400;color:#1d1d1d;letter-spacing:-0.31px;">2020-01-25T23:12:00.000Z</div>
<div class="t" style="left:659.30px;top:853.29px;font-size:16.2px;font-weight:400;color:#1d1d1d;letter-spacing:-0.31px;">2020-01-25T23:38:00.000Z</div>
<div class="t" style="left:909.30px;top:853.29px;font-size:16.2px;font-weight:400;color:#1d1d1d;letter-spacing:-0.31px;">951522.85</div>
<div class="t" style="left:1159.30px;top:853.29px;font-size:16.2px;font-weight:400;color:#1d1d1d;letter-spacing:-0.31px;">219520.23</div>
<div class="t" style="left:1409.30px;top:853.29px;font-size:16.2px;font-weight:400;color:#1d1d1d;letter-spacing:-0.31px;transform:scaleX(0.89);transform-origin:0 0;">AUS</div>
<div class="a" style="left:327px;top:881px;width:1576px;height:36px;background:#fff"></div>
<div class="a" style="left:327px;top:917px;width:1576px;height:1px;background:#ebebeb"></div>
<div class="t" style="left:409.30px;top:890.79px;font-size:16.2px;font-weight:400;color:#1d1d1d;letter-spacing:-0.31px;">2020-02-17T09:34:00.000Z</div>
<div class="t" style="left:659.30px;top:890.79px;font-size:16.2px;font-weight:400;color:#1d1d1d;letter-spacing:-0.31px;">2020-02-17T09:40:00.000Z</div>
<div class="t" style="left:909.30px;top:890.79px;font-size:16.2px;font-weight:400;color:#1d1d1d;letter-spacing:-0.31px;transform:scaleX(1.17);transform-origin:0 0;">null</div>
<div class="t" style="left:1159.30px;top:890.79px;font-size:16.2px;font-weight:400;color:#1d1d1d;letter-spacing:-0.31px;transform:scaleX(1.17);transform-origin:0 0;">null</div>
<div class="t" style="left:1409.30px;top:890.79px;font-size:16.2px;font-weight:400;color:#1d1d1d;letter-spacing:-0.31px;transform:scaleX(1.17);transform-origin:0 0;">null</div>
<div class="a" style="left:327px;top:918px;width:1576px;height:37px;background:#f9f9f9"></div>
<div class="a" style="left:327px;top:955px;width:1576px;height:1px;background:#ebebeb"></div>
<div class="t" style="left:409.30px;top:928.29px;font-size:16.2px;font-weight:400;color:#1d1d1d;letter-spacing:-0.31px;">2020-02-17T21:29:00.000Z</div>
<div class="t" style="left:659.30px;top:928.29px;font-size:16.2px;font-weight:400;color:#1d1d1d;letter-spacing:-0.31px;">2020-02-17T21:52:00.000Z</div>
<div class="t" style="left:909.30px;top:928.29px;font-size:16.2px;font-weight:400;color:#1d1d1d;letter-spacing:-0.31px;transform:scaleX(1.17);transform-origin:0 0;">null</div>
<div class="t" style="left:1159.30px;top:928.29px;font-size:16.2px;font-weight:400;color:#1d1d1d;letter-spacing:-0.31px;transform:scaleX(1.17);transform-origin:0 0;">null</div>
<div class="t" style="left:1409.30px;top:928.29px;font-size:16.2px;font-weight:400;color:#1d1d1d;letter-spacing:-0.31px;transform:scaleX(1.17);transform-origin:0 0;">null</div>
</div></div>
<div class="a" style="left:1903px;top:247px;width:7px;height:246px;border-radius:3.5px;background:#c2c2c2"></div>
<div class="a" style="left:1075px;top:963px;width:1828px;height:16px;border-radius:6px;background:#c6c6c6;width:828px"></div>
<div class="a" style="left:1910px;top:104px;width:6px;height:876px;background:#fafafa"></div>
</body></html>
